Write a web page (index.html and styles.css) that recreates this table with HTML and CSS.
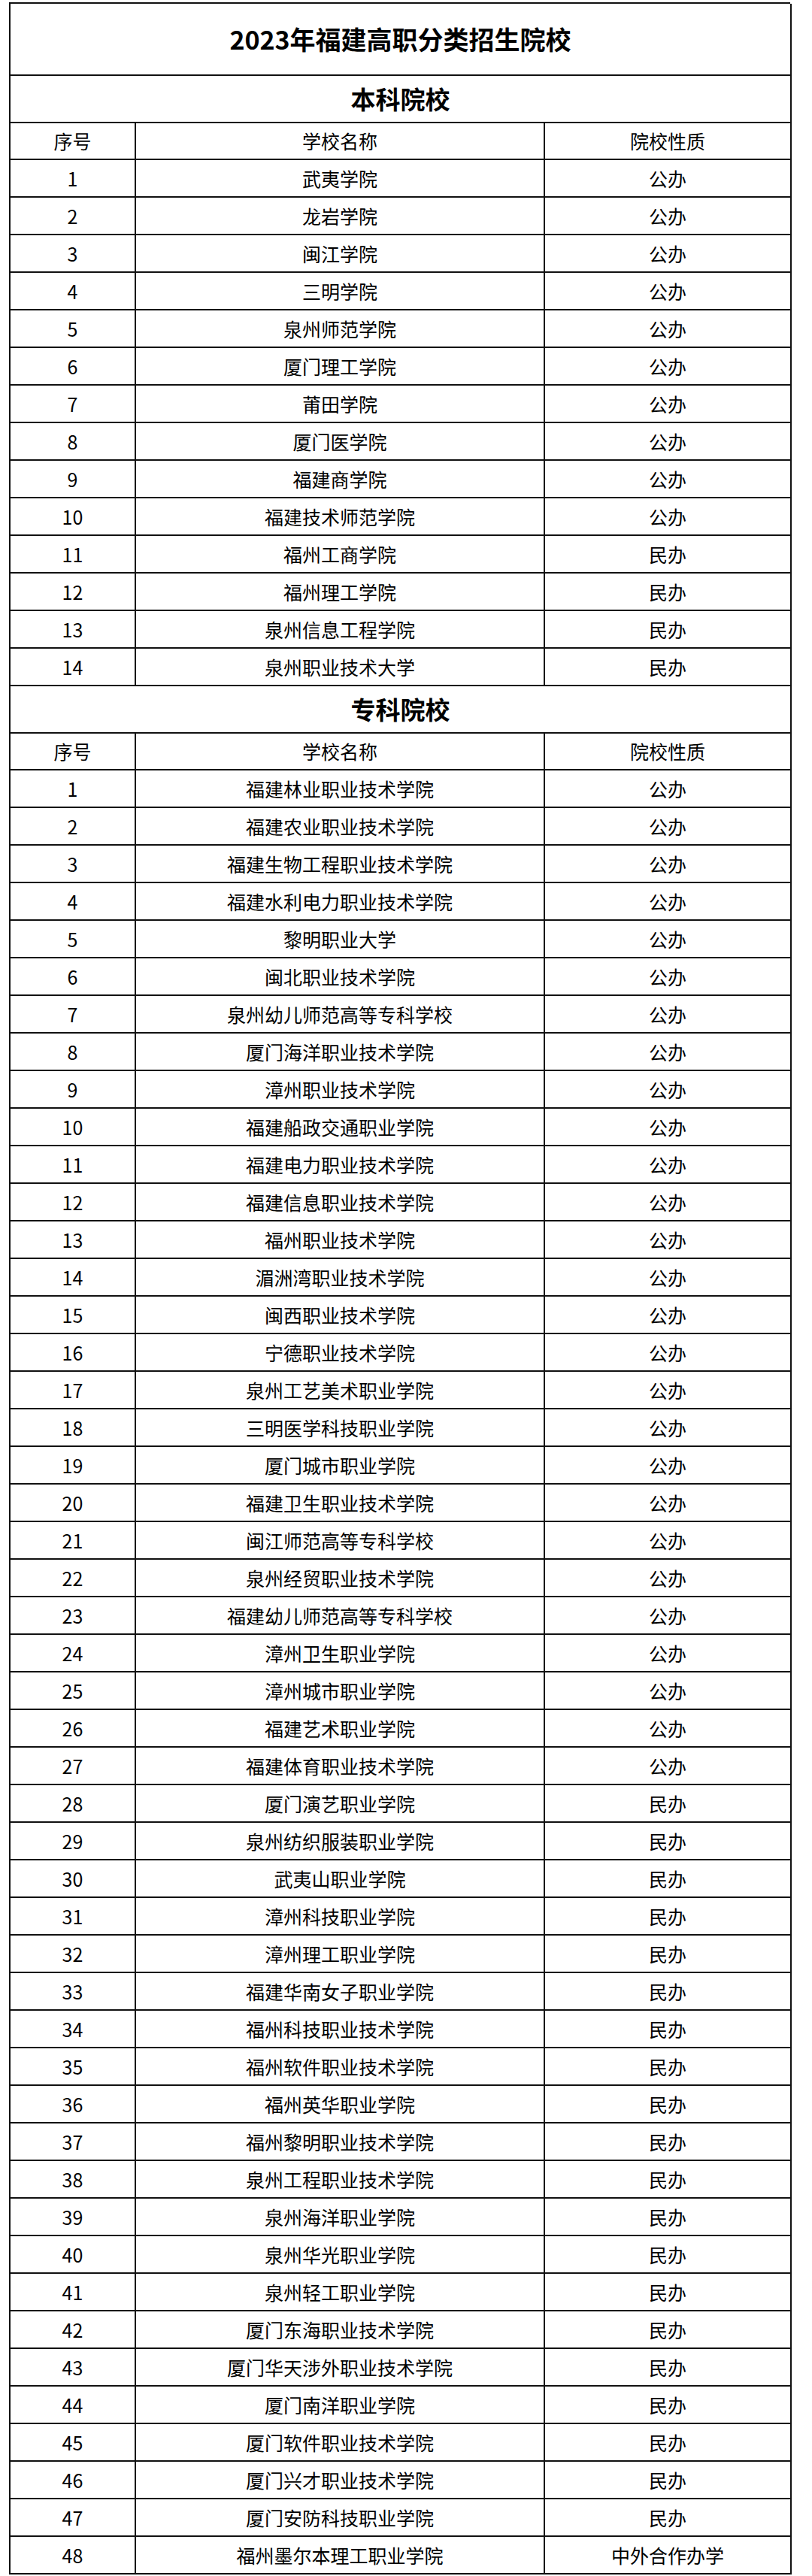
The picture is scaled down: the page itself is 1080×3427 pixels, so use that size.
FILE: index.html
```html
<!DOCTYPE html>
<html lang="zh-CN">
<head>
<meta charset="utf-8">
<title>2023年福建高职分类招生院校</title>
<link rel="stylesheet" href="styles.css">
</head>
<body>
<div class="sheet">
  <div class="cell span title">2023年福建高职分类招生院校</div>

  <div class="cell span section">本科院校</div>
  <div class="cell head">序号</div><div class="cell head">学校名称</div><div class="cell head">院校性质</div>
  <div class="cell">1</div><div class="cell">武夷学院</div><div class="cell">公办</div>
  <div class="cell">2</div><div class="cell">龙岩学院</div><div class="cell">公办</div>
  <div class="cell">3</div><div class="cell">闽江学院</div><div class="cell">公办</div>
  <div class="cell">4</div><div class="cell">三明学院</div><div class="cell">公办</div>
  <div class="cell">5</div><div class="cell">泉州师范学院</div><div class="cell">公办</div>
  <div class="cell">6</div><div class="cell">厦门理工学院</div><div class="cell">公办</div>
  <div class="cell">7</div><div class="cell">莆田学院</div><div class="cell">公办</div>
  <div class="cell">8</div><div class="cell">厦门医学院</div><div class="cell">公办</div>
  <div class="cell">9</div><div class="cell">福建商学院</div><div class="cell">公办</div>
  <div class="cell">10</div><div class="cell">福建技术师范学院</div><div class="cell">公办</div>
  <div class="cell">11</div><div class="cell">福州工商学院</div><div class="cell">民办</div>
  <div class="cell">12</div><div class="cell">福州理工学院</div><div class="cell">民办</div>
  <div class="cell">13</div><div class="cell">泉州信息工程学院</div><div class="cell">民办</div>
  <div class="cell">14</div><div class="cell">泉州职业技术大学</div><div class="cell">民办</div>

  <div class="cell span section">专科院校</div>
  <div class="cell head">序号</div><div class="cell head">学校名称</div><div class="cell head">院校性质</div>
  <div class="cell">1</div><div class="cell">福建林业职业技术学院</div><div class="cell">公办</div>
  <div class="cell">2</div><div class="cell">福建农业职业技术学院</div><div class="cell">公办</div>
  <div class="cell">3</div><div class="cell">福建生物工程职业技术学院</div><div class="cell">公办</div>
  <div class="cell">4</div><div class="cell">福建水利电力职业技术学院</div><div class="cell">公办</div>
  <div class="cell">5</div><div class="cell">黎明职业大学</div><div class="cell">公办</div>
  <div class="cell">6</div><div class="cell">闽北职业技术学院</div><div class="cell">公办</div>
  <div class="cell">7</div><div class="cell">泉州幼儿师范高等专科学校</div><div class="cell">公办</div>
  <div class="cell">8</div><div class="cell">厦门海洋职业技术学院</div><div class="cell">公办</div>
  <div class="cell">9</div><div class="cell">漳州职业技术学院</div><div class="cell">公办</div>
  <div class="cell">10</div><div class="cell">福建船政交通职业学院</div><div class="cell">公办</div>
  <div class="cell">11</div><div class="cell">福建电力职业技术学院</div><div class="cell">公办</div>
  <div class="cell">12</div><div class="cell">福建信息职业技术学院</div><div class="cell">公办</div>
  <div class="cell">13</div><div class="cell">福州职业技术学院</div><div class="cell">公办</div>
  <div class="cell">14</div><div class="cell">湄洲湾职业技术学院</div><div class="cell">公办</div>
  <div class="cell">15</div><div class="cell">闽西职业技术学院</div><div class="cell">公办</div>
  <div class="cell">16</div><div class="cell">宁德职业技术学院</div><div class="cell">公办</div>
  <div class="cell">17</div><div class="cell">泉州工艺美术职业学院</div><div class="cell">公办</div>
  <div class="cell">18</div><div class="cell">三明医学科技职业学院</div><div class="cell">公办</div>
  <div class="cell">19</div><div class="cell">厦门城市职业学院</div><div class="cell">公办</div>
  <div class="cell">20</div><div class="cell">福建卫生职业技术学院</div><div class="cell">公办</div>
  <div class="cell">21</div><div class="cell">闽江师范高等专科学校</div><div class="cell">公办</div>
  <div class="cell">22</div><div class="cell">泉州经贸职业技术学院</div><div class="cell">公办</div>
  <div class="cell">23</div><div class="cell">福建幼儿师范高等专科学校</div><div class="cell">公办</div>
  <div class="cell">24</div><div class="cell">漳州卫生职业学院</div><div class="cell">公办</div>
  <div class="cell">25</div><div class="cell">漳州城市职业学院</div><div class="cell">公办</div>
  <div class="cell">26</div><div class="cell">福建艺术职业学院</div><div class="cell">公办</div>
  <div class="cell">27</div><div class="cell">福建体育职业技术学院</div><div class="cell">公办</div>
  <div class="cell">28</div><div class="cell">厦门演艺职业学院</div><div class="cell">民办</div>
  <div class="cell">29</div><div class="cell">泉州纺织服装职业学院</div><div class="cell">民办</div>
  <div class="cell">30</div><div class="cell">武夷山职业学院</div><div class="cell">民办</div>
  <div class="cell">31</div><div class="cell">漳州科技职业学院</div><div class="cell">民办</div>
  <div class="cell">32</div><div class="cell">漳州理工职业学院</div><div class="cell">民办</div>
  <div class="cell">33</div><div class="cell">福建华南女子职业学院</div><div class="cell">民办</div>
  <div class="cell">34</div><div class="cell">福州科技职业技术学院</div><div class="cell">民办</div>
  <div class="cell">35</div><div class="cell">福州软件职业技术学院</div><div class="cell">民办</div>
  <div class="cell">36</div><div class="cell">福州英华职业学院</div><div class="cell">民办</div>
  <div class="cell">37</div><div class="cell">福州黎明职业技术学院</div><div class="cell">民办</div>
  <div class="cell">38</div><div class="cell">泉州工程职业技术学院</div><div class="cell">民办</div>
  <div class="cell">39</div><div class="cell">泉州海洋职业学院</div><div class="cell">民办</div>
  <div class="cell">40</div><div class="cell">泉州华光职业学院</div><div class="cell">民办</div>
  <div class="cell">41</div><div class="cell">泉州轻工职业学院</div><div class="cell">民办</div>
  <div class="cell">42</div><div class="cell">厦门东海职业技术学院</div><div class="cell">民办</div>
  <div class="cell">43</div><div class="cell">厦门华天涉外职业技术学院</div><div class="cell">民办</div>
  <div class="cell">44</div><div class="cell">厦门南洋职业学院</div><div class="cell">民办</div>
  <div class="cell">45</div><div class="cell">厦门软件职业技术学院</div><div class="cell">民办</div>
  <div class="cell">46</div><div class="cell">厦门兴才职业技术学院</div><div class="cell">民办</div>
  <div class="cell">47</div><div class="cell">厦门安防科技职业学院</div><div class="cell">民办</div>
  <div class="cell">48</div><div class="cell">福州墨尔本理工职业学院</div><div class="cell">中外合作办学</div>
</div>
</body>
</html>
```

FILE: styles.css
```css
html, body {
  margin: 0;
  padding: 0;
  background: #ffffff;
}

body {
  padding: 3px 0 0 12px;
  font-family: "Noto Sans CJK SC", "Noto Sans", sans-serif;
  color: #000000;
}

.sheet {
  display: grid;
  grid-template-columns: 167px 544px 328px;
  width: 1039px;
  box-sizing: border-box;
  border-top: 2px solid #111111;
  border-left: 2px solid #111111;
}

.cell {
  box-sizing: border-box;
  height: 50px;
  display: flex;
  align-items: center;
  justify-content: center;
  border-right: 2px solid #111111;
  border-bottom: 2px solid #111111;
  font-size: 25px;
  line-height: 1;
  white-space: nowrap;
}

.cell:nth-child(3n+1) {
}

.span {
  grid-column: 1 / -1;
}

.title {
  height: 96px;
  font-size: 34px;
  font-weight: 700;
}

.section {
  height: 63px;
  font-size: 33px;
  font-weight: 700;
}

.head {
  height: 49px;
}
```
